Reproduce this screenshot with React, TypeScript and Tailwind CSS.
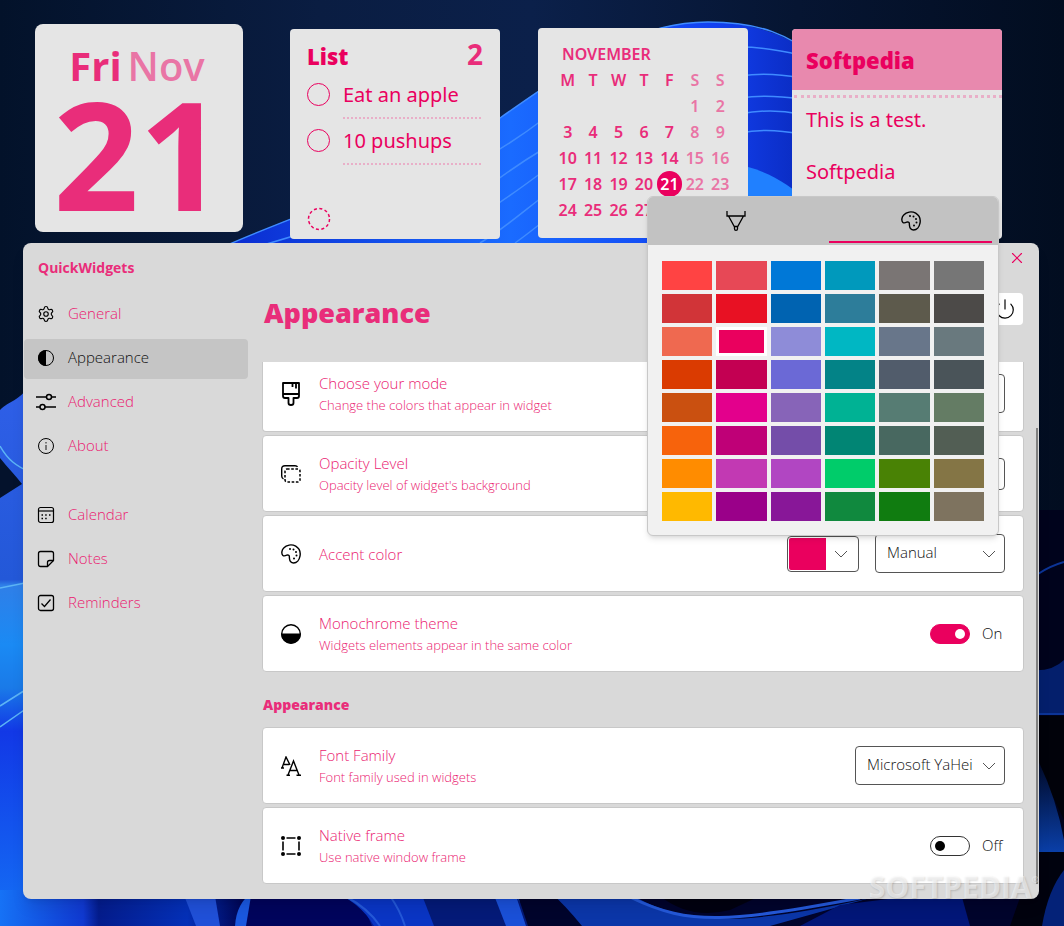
import { useState } from "react";
import type { ReactNode } from "react";
import { Power, Settings, X } from "lucide-react";

const swatches = [
  "#ff4343", "#e74856", "#0078d7", "#0099bc", "#7a7574", "#767676",
  "#d13438", "#e81123", "#0063b1", "#2d7d9a", "#5d5a4c", "#4c4a48",
  "#ef6950", "#ea005e", "#8e8cd8", "#00b7c3", "#68768a", "#69797e",
  "#da3b01", "#c30052", "#6b69d6", "#038387", "#515c6b", "#4a5459",
  "#ca5010", "#e3008c", "#8764b8", "#00b294", "#567c73", "#647c64",
  "#f7630c", "#bf0077", "#744da9", "#018574", "#486860", "#525e54",
  "#ff8c00", "#c239b3", "#b146c2", "#00cc6a", "#498205", "#847545",
  "#ffb900", "#9a0089", "#881798", "#10893e", "#107c10", "#7e735f",
];

const weeks = [
  ["", "", "", "", "", "1", "2"],
  ["3", "4", "5", "6", "7", "8", "9"],
  ["10", "11", "12", "13", "14", "15", "16"],
  ["17", "18", "19", "20", "21", "22", "23"],
  ["24", "25", "26", "27", "28", "29", "30"],
];

function Wallpaper() {
  return (
    <svg
      className="absolute inset-0 w-full h-full"
      viewBox="0 0 1064 926"
      preserveAspectRatio="xMidYMid slice"
      aria-hidden="true"
    >
      <defs>
        <linearGradient id="night" x1="0" y1="0" x2="1" y2="0">
          <stop offset="0" stopColor="#03122a" />
          <stop offset="0.3" stopColor="#0a1d42" />
          <stop offset="0.5" stopColor="#0b204a" />
          <stop offset="0.75" stopColor="#061532" />
          <stop offset="1" stopColor="#020d20" />
        </linearGradient>
        <linearGradient id="petal" x1="0" y1="0" x2="1" y2="0">
          <stop offset="0" stopColor="#0a2bd0" />
          <stop offset="0.42" stopColor="#1a6bff" />
          <stop offset="0.72" stopColor="#1240f0" />
          <stop offset="0.85" stopColor="#0a2bc0" />
          <stop offset="1" stopColor="#0a2bc0" />
        </linearGradient>
        <linearGradient id="left" x1="0" y1="0" x2="0" y2="1">
          <stop offset="0" stopColor="#2f5fe8" />
          <stop offset="0.36" stopColor="#2358d8" />
          <stop offset="0.37" stopColor="#2f7fe8" />
          <stop offset="0.48" stopColor="#1a8af4" />
          <stop offset="0.56" stopColor="#1a7ae8" />
          <stop offset="0.64" stopColor="#1238e6" />
          <stop offset="1" stopColor="#1470f5" />
        </linearGradient>
        <linearGradient id="floor" x1="0" y1="0" x2="1" y2="0">
          <stop offset="0" stopColor="#1672f6" />
          <stop offset="0.16" stopColor="#1039d0" />
          <stop offset="0.19" stopColor="#041c8c" />
          <stop offset="0.36" stopColor="#0430b8" />
          <stop offset="0.48" stopColor="#000048" />
          <stop offset="0.64" stopColor="#000060" />
          <stop offset="0.78" stopColor="#0a35c0" />
          <stop offset="0.82" stopColor="#000828" />
          <stop offset="1" stopColor="#0530a8" />
        </linearGradient>
        <linearGradient id="glow" x1="0" y1="0" x2="0" y2="1">
          <stop offset="0" stopColor="#000010" />
          <stop offset="1" stopColor="#0a3fa8" />
        </linearGradient>
      </defs>
      <rect width="1064" height="926" fill="url(#night)" />
      <path d="M225 246C330 200 440 170 500 118C590 55 640 22 708 22C810 22 880 90 905 246Z" fill="url(#petal)" />
      <g fill="none" stroke="#3f8bff" strokeWidth="1.500">
        <path d="M225 246C330 200 440 170 500 118C590 55 640 22 708 22C760 22 790 35 820 60" />
        <path d="M260 246C400 205 470 175 545 118" />
        <path d="M490 185C510 170 525 160 545 148" />
        <path d="M480 215C505 200 525 185 545 170" />
        <path d="M480 243C505 228 525 210 545 195" />
        <path d="M515 243C525 236 535 228 545 220" />
        <path d="M740 47C760 47 780 50 800 55" />
        <path d="M740 76C760 73 780 74 800 78" />
        <path d="M740 98C760 95 780 96 800 99" />
        <path d="M740 114C760 110 780 110 800 114" />
        <path d="M740 133C760 129 780 130 800 134" />
      </g>
      <path d="M730 164C760 166 790 184 805 200V250H730Z" fill="#2080ff" />
      <path d="M0 410C10 400 18 402 30 385V926H0Z" fill="url(#left)" />
      <path d="M0 458C8 468 16 476 22 484L0 498Z" fill="#04122c" />
      <path d="M0 446C8 460 16 466 30 472M0 588L30 582M0 706L30 687M0 727L30 706" fill="none" stroke="#5cb4f5" strokeWidth="1.500" />
      <path d="M0 890H520V926H0Z" fill="url(#floor)" />
      <path d="M182 890L196 926H220L214 890Z" fill="#2050d8" />
      <path d="M235 926C236 910 242 900 252 892H260L250 926Z" fill="#1a58e0" />
      <path d="M252 890H350Q364 905 372 926H246Z" fill="#00045c" />
      <path d="M330 890C350 898 365 910 374 926H438L420 890Z" fill="#0a35c4" />
      <path d="M345 896C362 905 372 914 380 926M390 896Q400 910 405 926" fill="none" stroke="#2458d8" strokeWidth="2" />
      <path d="M420 890L434 926H540L510 890Z" fill="#041a78" />
      <path d="M492 890L506 926H526L514 890Z" fill="#1a50d8" />
      <path d="M516 890H1064V926H528Z" fill="#00042c" />
      <path d="M548 890Q565 905 582 926H770L870 898Q750 925 700 917Q655 912 625 890Z" fill="#0b36a8" />
      <path d="M660 896Q690 920 730 910L760 896Z" fill="#000010" />
      <path d="M632 898C690 926 730 922 860 898" fill="none" stroke="#2458d8" strokeWidth="3" />
      <path d="M840 905L960 890L970 926H800Z" fill="#021678" />
      <path d="M1030 510H1064V926H1030Z" fill="#00031c" />
      <path d="M1030 670Q1052 672 1064 660V715H1030Z" fill="#041f6c" />
      <path d="M1030 716H1064V820Q1050 790 1030 750Z" fill="#01020a" />
      <path d="M1030 745Q1055 790 1064 840V852H1030Z" fill="url(#glow)" />
      <path d="M1036 852H1064V926H1010Z" fill="#00020e" />
      <path d="M1064 870Q1048 890 1042 926H1064Z" fill="#042278" />
      <path d="M1038 574Q1050 566 1064 562M1038 714H1064" fill="none" stroke="#0c3496" strokeWidth="2" />
    </svg>
  );
}

function PaletteIcon({ className }: { className?: string }) {
  return (
    <svg viewBox="0 0 20 20" className={className} fill="none" stroke="currentColor" strokeWidth="1.400">
      <path d="M8.300 12.200C8.100 11 6.900 10.700 5.700 11.200C4.400 11.800 3 12.400 1.900 11.400C.2 9.800.6 6.200 2.700 4C5.400 1 10.500-.2 14.700 2.200C18.300 4.400 19.700 8.500 19 12.200C18.300 15.900 15.800 19 12.600 19C9.800 18.900 8.700 17 8.500 14.800Z" strokeLinejoin="round" />
      <g fill="currentColor" stroke="none">
        <circle cx="9" cy="5" r="1" />
        <circle cx="12.500" cy="5.500" r="1" />
        <circle cx="15" cy="8" r="1" />
        <circle cx="15.500" cy="11.500" r="1" />
        <circle cx="13" cy="14.500" r="1" />
      </g>
    </svg>
  );
}

function ChevronIcon({ className }: { className?: string }) {
  return (
    <svg viewBox="0 0 14 8" width="14" height="8" className={className} fill="none" stroke="#555">
      <path d="M1 1L7 7L13 1" />
    </svg>
  );
}

function NavItem({ label, icon, active }: { label: string; icon: ReactNode; active?: boolean }) {
  return (
    <a
      href="#"
      className={
        active
          ? "flex items-center h-10 pb-[3px] rounded bg-[#c5c5c5] text-[#111]"
          : "flex items-center h-10 pb-[3px] rounded text-[#ea1a70]"
      }
    >
      <span className="flex justify-center w-11 text-black">{icon}</span>
      <span>{label}</span>
    </a>
  );
}

function SettingCard({ icon, title, text, children, clipped }: {
  icon: ReactNode;
  title: string;
  text?: string;
  children: ReactNode;
  clipped?: boolean;
}) {
  return (
    <div
      className={
        clipped
          ? "flex items-center h-[70px] pb-1.5 pr-[18px] bg-white border border-t-0 border-[#c8c8c8] rounded-b"
          : "flex items-center h-[77px] pr-[18px] bg-white border border-[#c8c8c8] rounded"
      }
    >
      <div className="flex justify-center w-14 shrink-0">{icon}</div>
      <div className="flex-1 text-[#ea1a70]">
        <h3 className="text-[15px] leading-[22px]">{title}</h3>
        {text && <p className="text-[13px] leading-[22px]">{text}</p>}
      </div>
      {children}
    </div>
  );
}

function Dropdown({ label, options, className }: { label: string; options: string[]; className: string }) {
  return (
    <div className={"relative " + className}>
      <select
        aria-label={label}
        className="appearance-none w-full h-[39px] pl-[11px] pr-6 pb-0.5 bg-white border border-[#555] rounded text-[#111] text-[15px]"
      >
        {options.map((option) => (
          <option key={option}>{option}</option>
        ))}
      </select>
      <ChevronIcon className="absolute right-[9px] top-4 pointer-events-none" />
    </div>
  );
}

function Toggle({ label, initial }: { label: string; initial: boolean }) {
  const [on, setOn] = useState(initial);
  return (
    <label className="flex items-center gap-3 w-[75px] text-[#111]">
      <input
        type="checkbox"
        role="switch"
        aria-label={label}
        checked={on}
        onChange={() => setOn(!on)}
        className="appearance-none flex items-center shrink-0 w-10 h-5 px-1 border border-[#333] rounded-full before:block before:size-[10px] before:rounded-full before:bg-black before:content-[''] checked:justify-end checked:border-[#ea005e] checked:bg-[#ea005e] checked:before:bg-white"
      />
      {on ? "On" : "Off"}
    </label>
  );
}

function ColorFlyout() {
  const [selected, setSelected] = useState("#ea005e");
  return (
    <div className="absolute z-10 bottom-full left-1/2 -translate-x-1/2 w-[352px] bg-[#f1f1f1] border border-[#c8c8c8] rounded-md overflow-hidden shadow-md">
      <div className="grid grid-cols-2 h-12 bg-[#c2c2c2] text-black">
        <button aria-label="Custom colors" className="flex items-center justify-center">
          <svg viewBox="0 0 20 20" className="size-5" fill="none" stroke="currentColor" strokeWidth="1.300">
            <path d="M1 0V5H19V0M2.500 5L8.300 15.500H11.700L17.500 5M8.500 15.500V18Q8.500 19.300 10 19.300Q11.500 19.300 11.500 18V15.500" />
          </svg>
        </button>
        <button aria-label="Palette" className="flex flex-col items-center justify-between px-1.5 pt-3.5 pb-0.5">
          <PaletteIcon className="size-5" />
          <span className="w-full h-0.5 bg-[#ea005e]" />
        </button>
      </div>
      <div className="grid grid-cols-6 gap-1 px-3.5 pt-4 pb-3.5">
        {swatches.map((color) => (
          <button
            key={color}
            aria-label={color}
            onClick={() => setSelected(color)}
            className={color === selected ? "h-[29px] border-[3px] border-white" : "h-[29px]"}
            style={{ backgroundColor: color }}
          />
        ))}
      </div>
    </div>
  );
}

function DateWidget() {
  return (
    <section className="size-[208px] pt-4 bg-[#e5e5e5] rounded-lg text-center font-['Open_Sans','Noto_Sans',sans-serif] font-bold text-[#e92d7a]">
      <p className="pr-1 text-[40px] leading-[52px]">
        Fri<span className="ml-1.5 font-semibold text-[#e975a5]">Nov</span>
      </p>
      <p className="text-[150px] leading-[122px]">21</p>
    </section>
  );
}

function ListWidget() {
  return (
    <section className="flex flex-col size-[210px] mt-[5px] ml-[47px] px-[17px] pb-2 bg-[#e5e5e5] rounded text-[#ea005e]">
      <header className="flex items-center justify-between h-[54px] font-bold">
        <h2 className="text-[22px] font-['Open_Sans','Noto_Sans',sans-serif] font-extrabold">List</h2>
        <span className="text-[28px] leading-[50px] pb-1 text-[#e92d7a]">2</span>
      </header>
      {["Eat an apple", "10 pushups"].map((item) => (
        <label key={item} className="flex items-start gap-[13px] h-[46px] pr-0.5">
          <input type="checkbox" className="appearance-none size-[23px] shrink-0 border border-[#ea005e] rounded-full" />
          <span className="flex-1 h-9 border-b-2 border-dotted border-[#e9afc8] text-xl leading-6">{item}</span>
        </label>
      ))}
      <button aria-label="Add item" className="mt-auto">
        <svg viewBox="0 0 24 24" className="size-6" fill="none" stroke="currentColor" strokeWidth="1.500">
          <circle cx="12" cy="12" r="10.500" strokeDasharray="3 2.500" />
        </svg>
      </button>
    </section>
  );
}

function CalendarWidget() {
  return (
    <section className="size-[210px] mt-1 ml-[38px] pl-[17px] pr-[15px] pt-3.5 bg-[#e5e5e5] rounded text-[#e92d7a]">
      <h2 className="pl-[7px] text-base leading-[25px] font-semibold">NOVEMBER</h2>
      <table className="w-full table-fixed text-center text-base leading-[26px] font-semibold">
        <thead>
          <tr>
            {["M", "T", "W", "T", "F", "S", "S"].map((day, i) => (
              <th key={i} className={i > 4 ? "p-0 font-semibold text-[#e975a5]" : "p-0 font-semibold"}>{day}</th>
            ))}
          </tr>
        </thead>
        <tbody>
          {weeks.map((week, row) => (
            <tr key={row} className="h-[26px]">
              {week.map((day, i) => (
                <td key={i} className={i > 4 ? "p-0 text-[#e975a5]" : "p-0"}>
                  {day === "21" ? (
                    <span className="block h-[26px] rounded-full bg-[#ea005e] text-white">{day}</span>
                  ) : (
                    day
                  )}
                </td>
              ))}
            </tr>
          ))}
        </tbody>
      </table>
    </section>
  );
}

function NoteWidget() {
  return (
    <section className="size-[210px] mt-[5px] ml-11 bg-[#e5e5e5] rounded overflow-hidden text-[#ea005e]">
      <h2 className="h-[61px] pl-3.5 bg-[#e889ae] text-[22px] leading-[63px] font-['Open_Sans','Noto_Sans',sans-serif] font-extrabold">
        Softpedia
      </h2>
      <div className="mt-[5px] ml-0.5 border-t-3 border-dotted border-[#e9afc8]" />
      <p className="pl-3.5 pt-1.5 text-xl leading-[32px]">This is a test.</p>
      <p className="pl-3.5 pt-5 text-xl leading-[32px]">Softpedia</p>
    </section>
  );
}

function Sidebar() {
  return (
    <nav className="w-[226px] shrink-0 px-px text-[15px]">
      <h1 className="h-[52px] pl-3.5 text-sm leading-[50px] font-bold text-[#e92d7a]">QuickWidgets</h1>
      <div className="flex flex-col gap-1">
        <NavItem label="General" icon={<Settings size={18} strokeWidth={1.5} />} />
        <NavItem
          label="Appearance"
          active
          icon={
            <svg width="18" height="18" viewBox="0 0 18 18">
              <circle cx="9" cy="9" r="7.500" fill="none" stroke="black" />
              <path d="M9 1A8 8 0 0 0 9 17Z" />
            </svg>
          }
        />
        <NavItem
          label="Advanced"
          icon={
            <svg width="20" height="18" viewBox="0 0 20 18" fill="none" stroke="black" strokeWidth="1.500">
              <path d="M0 4H10.500M15.500 4H20M0 14H4M9 14H20" />
              <circle cx="13" cy="4" r="2.500" />
              <circle cx="6.500" cy="14" r="2.500" />
            </svg>
          }
        />
        <NavItem
          label="About"
          icon={
            <svg width="18" height="18" viewBox="0 0 18 18" fill="none" stroke="black">
              <circle cx="9" cy="9" r="7.500" />
              <path d="M9 8V13M9 5V6.500" stroke="#555" strokeWidth="1.500" />
            </svg>
          }
        />
      </div>
      <div className="flex flex-col gap-1 mt-[29px]">
        <NavItem
          label="Calendar"
          icon={
            <svg width="18" height="18" viewBox="0 0 18 18" fill="none" stroke="black" strokeWidth="1.200">
              <rect x="1.500" y="1.500" width="15" height="15" rx="2" />
              <path d="M1.500 5H16.500" />
              <path d="M4.500 9H6M8.200 9H9.700M12 9H13.500M4.500 12.500H6M8.200 12.500H9.700" strokeWidth="1.500" />
            </svg>
          }
        />
        <NavItem
          label="Notes"
          icon={
            <svg width="18" height="18" viewBox="0 0 18 18" fill="none" stroke="black" strokeWidth="1.300" strokeLinejoin="round">
              <path d="M3.500 1.500H14.500Q16.500 1.500 16.500 3.500V10.500L10.500 16.500H3.500Q1.500 16.500 1.500 14.500V3.500Q1.500 1.500 3.500 1.500Z" />
              <path d="M16.500 10.500H12.500Q10.500 10.500 10.500 12.500V16.500" />
            </svg>
          }
        />
        <NavItem
          label="Reminders"
          icon={
            <svg width="18" height="18" viewBox="0 0 18 18" fill="none" stroke="black" strokeWidth="1.300">
              <rect x="1.500" y="1.500" width="15" height="15" rx="2" />
              <path d="M4.500 9.500L7.500 12.500L13.500 5.500" />
            </svg>
          }
        />
      </div>
    </nav>
  );
}

function SettingsWindow() {
  return (
    <div className="relative flex mr-[25px] -ml-px pb-[15px] bg-[#d9d9d9] rounded-lg shadow-lg font-light">
      <Sidebar />
      <main className="flex-1">
        <div className="flex justify-end h-[30px] pr-1.5">
          <button aria-label="Close" className="flex items-center justify-center w-8 text-[#ea005e]">
            <X size={18} strokeWidth={1.5} />
          </button>
        </div>
        <header className="flex items-start justify-between h-[89px] pt-5 pl-[15px] pr-4">
          <h2 className="text-[27px] leading-10 font-extrabold text-[#e92d7a]">Appearance</h2>
          <button aria-label="Quit" className="flex items-center justify-center w-9 h-8 bg-white rounded text-black">
            <Power size={22} strokeWidth={1.3} />
          </button>
        </header>
        <div className="flex pl-[13px] pr-px">
          <div className="flex flex-1 flex-col gap-[3px]">
            <SettingCard
              clipped
              title="Choose your mode"
              text="Change the colors that appear in widget"
              icon={
                <svg width="18" height="24" viewBox="0 0 18 24" fill="none" stroke="black" strokeWidth="1.800" strokeLinejoin="round">
                  <path d="M1 1H17V14Q17 16 15 16H11.500V21Q11.500 23 9 23Q6.500 23 6.500 21V16H3Q1 16 1 14ZM1 12H17M10.500 1V5M14 1V6.500" />
                </svg>
              }
            >
              <Dropdown label="Mode" options={["Light", "Dark"]} className="w-[130px]" />
            </SettingCard>
            <SettingCard
              title="Opacity Level"
              text="Opacity level of widget's background"
              icon={
                <svg width="20" height="18" viewBox="0 0 20 18" fill="none" stroke="black" strokeWidth="1.400">
                  <path d="M2.500 14Q.7 13 .7 11V4Q.7 .7 4 .7H14Q16 .7 16.500 2" />
                  <rect x="4" y="4" width="15" height="13" rx="2" strokeWidth="1.500" strokeDasharray="2.600 1.600" />
                </svg>
              }
            >
              <input
                type="number"
                aria-label="Opacity level"
                className="w-[130px] h-8 px-3 border border-[#555] rounded text-[#222]"
              />
            </SettingCard>
            <SettingCard title="Accent color" icon={<PaletteIcon className="size-5" />}>
              <div className="relative">
                <button
                  aria-label="Pick accent color"
                  className="flex items-center w-[72px] h-9 p-px pr-2.5 justify-between bg-white border border-[#555] rounded"
                >
                  <span className="w-[37px] h-full rounded-l-xs bg-[#ea005e]" />
                  <ChevronIcon />
                </button>
                <ColorFlyout />
              </div>
              <Dropdown label="Accent source" options={["Manual"]} className="w-[130px] ml-4" />
            </SettingCard>
            <SettingCard
              title="Monochrome theme"
              text="Widgets elements appear in the same color"
              icon={
                <svg width="20" height="20" viewBox="0 0 20 20">
                  <circle cx="10" cy="10" r="9.300" fill="none" stroke="black" strokeWidth="1.400" />
                  <path d="M0 9.500H20A10 10 0 0 1 0 9.500Z" />
                </svg>
              }
            >
              <Toggle label="Monochrome theme" initial={true} />
            </SettingCard>
            <h3 className="h-[49px] pl-px text-sm leading-[60px] font-extrabold text-[#e92d7a]">Appearance</h3>
            <SettingCard
              title="Font Family"
              text="Font family used in widgets"
              icon={
                <svg width="20" height="20" viewBox="0 0 20 20" fill="none" stroke="black" strokeWidth="1.400">
                  <path d="M1 12L5 1L9 9M0 12H3M3 8.500H8M7 19L12.500 5L18 19M5.500 19.300H9M15.500 19.300H20M8.500 14.500H16.500" />
                </svg>
              }
            >
              <Dropdown label="Font family" options={["Microsoft YaHei"]} className="w-[150px]" />
            </SettingCard>
            <SettingCard
              title="Native frame"
              text="Use native window frame"
              icon={
                <svg width="20" height="20" viewBox="0 0 20 20" stroke="black" strokeWidth="1.600">
                  <path d="M5.500 2H14.500M5.500 18H14.500M2 5.500V14.500M18 5.500V14.500" />
                  <g stroke="none">
                    <circle cx="2" cy="2" r="2" />
                    <circle cx="18" cy="2" r="2" />
                    <circle cx="2" cy="18" r="2" />
                    <circle cx="18" cy="18" r="2" />
                  </g>
                </svg>
              }
            >
              <Toggle label="Native frame" initial={false} />
            </SettingCard>
          </div>
          <div className="w-0.5 mt-[66px] ml-3 bg-[#808080]" />
        </div>
      </main>
      <div className="absolute right-0 bottom-0 flex items-start text-[30px] leading-6 font-bold text-white/50 [text-shadow:1px_1px_2px_rgb(0_0_0/0.15)] pointer-events-none">
        SOFTPEDIA<span className="text-[9px] leading-none">®</span>
      </div>
    </div>
  );
}

function App() {
  return (
    <div className="relative min-h-screen pl-6 overflow-hidden bg-[#03122a] font-['Open_Sans','Noto_Sans',sans-serif] text-[15px]">
      <Wallpaper />
      <div className="relative flex items-start h-[243px] pt-6 pl-[11px] font-['Noto_Sans','Open_Sans',sans-serif]">
        <DateWidget />
        <ListWidget />
        <CalendarWidget />
        <NoteWidget />
      </div>
      <SettingsWindow />
    </div>
  );
}

export default App;
